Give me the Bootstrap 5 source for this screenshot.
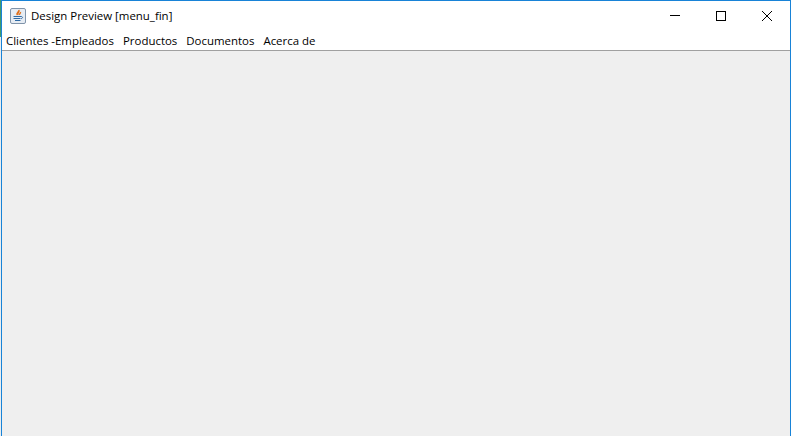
<!DOCTYPE html>
<html lang="en">
<head>
  <meta charset="UTF-8">
  <meta name="viewport" content="width=device-width, initial-scale=1.0">
  <title>Design Preview [menu_fin]</title>
  <link href="https://cdn.jsdelivr.net/npm/bootstrap@5.3.0/dist/css/bootstrap.min.css" rel="stylesheet">
  <style>
    html, body {
      height: 100%;
      margin: 0;
      overflow: hidden;
    }
    body {
      background: linear-gradient(to bottom, #3f9a6e 0, #3f9a6e 37px, #e9edf0 37px, #e9edf0 100%);
      padding-left: 1px;
      font-family: "Open Sans", "Noto Sans", sans-serif;
      font-size: 11.45px;
      color: #000;
    }
    #app-window {
      height: 436px;
      border: solid #1883d7;
      border-width: 1px 1px 0 1px;
      background-color: #fff;
    }
    #title-bar {
      height: 29px;
    }
    #title-icon {
      margin-left: 8px;
      margin-right: 5px;
    }
    .win-btn {
      width: 46px;
      height: 29px;
    }
    #menu-bar {
      height: 21px;
      padding-left: 4px;
      padding-top: 2px;
      gap: 9px;
      border-bottom: 1px solid #a0a0a0;
    }
    #client-area {
      background-color: #efefef;
    }
  </style>
</head>
<body>
  <div id="app-window" class="d-flex flex-column">
    <div id="title-bar" class="d-flex align-items-center">
      <svg id="title-icon" width="16" height="16" viewBox="0 0 16 16">
        <rect x="0.5" y="0.5" width="15" height="15" rx="1.5" fill="#e6ecf3" stroke="#8094aa"/>
        <path d="M7 7c-1-2 2-3 2-5 1 2-2 3-1 5M9.5 7c-.5-1 1.5-2 1-3" fill="none" stroke="#e0701c" stroke-width="1.3"/>
        <path d="M3.5 8.5h7.500M3.500 10.500h7M5 12.500h5.500M11 8.500c2 0 2 1.800 0 2.200" fill="none" stroke="#2f6aa5" stroke-width="1"/>
      </svg>
      <span class="flex-grow-1">Design Preview [menu_fin]</span>
      <div class="win-btn d-flex align-items-center justify-content-center">
        <svg width="10" height="10" viewBox="0 0 10 10"><path d="M0 4.5h10" stroke="#000" fill="none"/></svg>
      </div>
      <div class="win-btn d-flex align-items-center justify-content-center">
        <svg width="10" height="10" viewBox="0 0 10 10"><rect x="0.5" y="0.5" width="9" height="9" stroke="#000" fill="none"/></svg>
      </div>
      <div class="win-btn d-flex align-items-center justify-content-center">
        <svg width="10" height="10" viewBox="0 0 10 10"><path d="M0 0l10 10M10 0L0 10" stroke="#000" fill="none"/></svg>
      </div>
    </div>
    <div id="menu-bar" class="d-flex align-items-center">
      <span>Clientes -Empleados</span>
      <span>Productos</span>
      <span>Documentos</span>
      <span>Acerca de</span>
    </div>
    <div id="client-area" class="flex-grow-1"></div>
  </div>
  <script src="https://cdn.jsdelivr.net/npm/bootstrap@5.3.0/dist/js/bootstrap.bundle.min.js"></script>
</body>
</html>
